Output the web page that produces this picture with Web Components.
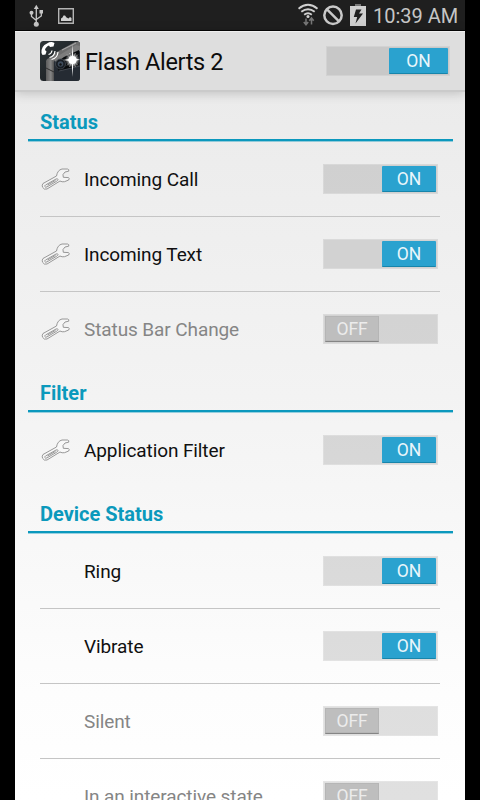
<!DOCTYPE html>
<html lang="en">
<head>
<meta charset="utf-8">
<title>Flash Alerts 2</title>
<style>
html, body { margin: 0; height: 800px; overflow: hidden; background: #000; font-family: Roboto, "Liberation Sans", sans-serif; }
</style>
</head>
<body>
<flash-app></flash-app>
<script>
class Base extends HTMLElement {
  connectedCallback() {
    if (this.shadowRoot) return;
    this.attachShadow({ mode: "open" }).innerHTML = this.render();
  }
}

customElements.define("status-bar", class extends Base {
  render() {
    return `<style>
      :host { display: flex; align-items: center; height: 30px; background: #1f1f1f; border-bottom: 1px solid #050505; color: #c6c6c6; }
      svg { display: block; flex: none; }
      .space { flex: 1; }
      .time { box-sizing: border-box; width: 85px; height: 30px; padding-top: 2px; margin-right: 7px; font-size: 20px; line-height: 28px; white-space: nowrap; letter-spacing: 0; }
    </style>
    <svg width="60" height="30" viewBox="15 0 60 30" fill="none" stroke="#c6c6c6">
      <path d="M36.300 8V24M31.500 13V16.500L36.300 20.500M41.300 13V16L36.300 19.500" stroke-width="1.300"/>
      <path d="M36.300 4.800L38.800 9H33.800Z" fill="#c6c6c6" stroke="none"/>
      <circle cx="36.300" cy="24.300" r="2.500" fill="#c6c6c6" stroke="none"/>
      <circle cx="31.500" cy="12.800" r="2" fill="#c6c6c6" stroke="none"/>
      <path d="M39.500 10H43V13.500H39.500Z" fill="#c6c6c6" stroke="none"/>
      <path d="M58.700 8.700H73.300V23.300H58.700Z" stroke="#b4b4b4" stroke-width="1.400"/>
      <path d="M61 21V18.500L62.500 17.500L63.500 15.500H65L66.500 17.500L68.500 18.500L70 17L71.500 18V21Z" fill="#d0d0d0" stroke="none"/>
    </svg>
    <span class="space"></span>
    <svg width="75" height="30" viewBox="298 0 75 30" fill="none" stroke="#d0d0d0">
      <g stroke-width="1.900">
        <path d="M298.500 8.700Q308 1 317.500 8.700M301.300 11.800Q308 6.500 314.700 11.800M304.200 14.700Q308 11.800 311.800 14.700"/>
      </g>
      <circle cx="308" cy="16.600" r="1.500" fill="#d0d0d0" stroke="none"/>
      <path d="M306 18.500V24.500M303.800 22L306 24.700L308.200 22M311.500 24.500V18.500M309.300 20.700L311.500 18L313.700 20.700" stroke="#777" stroke-width="1.500"/>
      <circle cx="333" cy="15.300" r="8.700" stroke="#c9c9c9" stroke-width="2.500"/>
      <path d="M327 9.300L339 21.300" stroke="#c9c9c9" stroke-width="2.500"/>
      <path d="M355 4H361V6H355Z" fill="#777" stroke="none"/>
      <path d="M350 6H366V26H350Z" fill="#cfcfcf" stroke="none"/>
      <path d="M356 9.500H361.500L359 13.500H363L355.500 23.500L357.200 17H353.800Z" fill="#1f1f1f" stroke="none"/>
    </svg>
    <span class="time">10:39 AM</span>`;
  }
});

customElements.define("toggle-switch", class extends Base {
  render() {
    const on = this.hasAttribute("on");
    return `<style>
      :host { display: flex; box-sizing: border-box; flex: none; width: var(--w, 115px); height: 30px; padding: 2px 2px 2px 2px; background: var(--track, rgba(0,0,0,.12)); box-shadow: inset 0 0 0 1px rgba(255,255,255,.18); justify-content: ${on ? "flex-end" : "flex-start"}; }
      span { box-sizing: border-box; width: var(--thumb, 54px); height: 26px; padding-top: 1px; border-radius: 1px; text-align: center; font-size: 17.500px; line-height: 25px; letter-spacing: -.1px;
        ${on ? "background: #2aa2cf; color: #e9f6fb; border-bottom: 1px solid #1785ab;" : "background: #bebebe; color: #ececec; border-bottom: 1px solid #858585; box-shadow: inset 0 0 0 .5px #adadad;"} }
    </style><span>${on ? "ON" : "OFF"}</span>`;
  }
});

customElements.define("app-icon", class extends Base {
  render() {
    return `<style>:host { display: block; width: 40px; height: 40px; flex: none; } svg { display: block; }</style>
    <svg width="40" height="40" viewBox="0 0 40 40">
      <defs>
        <clipPath id="c"><rect width="40" height="40" rx="3.500"/></clipPath>
        <linearGradient id="bg" x2="1" y2="1"><stop stop-color="#2e3538"/><stop offset="1" stop-color="#15191d"/></linearGradient>
        <linearGradient id="m" x2="1"><stop stop-color="#5c5c5c"/><stop offset=".6" stop-color="#858585"/><stop offset="1" stop-color="#505050"/></linearGradient>
        <radialGradient id="g"><stop stop-color="#fff"/><stop offset=".35" stop-color="#fff" stop-opacity=".8"/><stop offset="1" stop-color="#fff" stop-opacity="0"/></radialGradient>
      </defs>
      <g clip-path="url(#c)">
        <rect width="40" height="40" fill="url(#bg)"/>
        <path d="M6 40V21Q6 18 9 17L15 12L35 1H40V40Z" fill="#6c6c6c"/>
        <path d="M6 40V21L10 17L14 21V40Z" fill="url(#m)"/>
        <path d="M14 40V22Q14 18 17 17L40 8V40Z" fill="#252b33"/>
        <path d="M13 18L36 4L40 5V10L16 21Z" fill="#7d7d7d"/>
        <path d="M22 9L36 2" stroke="#aaa" stroke-width="1"/>
        <path d="M6 27L14 31" stroke="#303030"/>
        <path d="M17 21L24 16L39 9V25L19 30Q16 27 17 21Z" fill="#090b0d"/>
        <path d="M19 30L40 25" stroke="#4c535b" stroke-width=".8"/>
        <circle cx="20.500" cy="23" r="5" fill="#181d23" stroke="#484e56" stroke-width=".8"/>
        <circle cx="20.500" cy="23" r="2.800" fill="#3e4b5b"/>
        <circle cx="20.500" cy="23.500" r="1.200" fill="#111"/>
        <path d="M1.500 12Q1 5 7 2.500Q11 0 14.500 2L13.500 5.500L10 6L9 4.500Q5.500 6 5 9L6.500 10.500L5.500 13.500L2.500 14Z" fill="#fff"/>
        <path d="M8.500 13.500Q11.500 13 12 9.500M9.500 16.500Q14.500 15.500 15 10M11.500 18.500Q17.500 17 18 11" stroke="#fff" stroke-width="1.200" fill="none"/>
        <circle cx="32.500" cy="19" r="7.500" fill="url(#g)"/>
        <path d="M32.500 3L33.200 17L40 18.800L33.400 20.300L32.500 36L31.700 20.300L23 19L31.700 17.500Z" fill="#fff"/>
        <path d="M27 13.500L38 24.500M38 13.500L27 24.500M29.500 12L35.500 26M35.500 12L29.500 26" stroke="#fff" stroke-width=".4"/>
        <circle cx="32.500" cy="19" r="4" fill="#fff"/>
      </g>
    </svg>`;
  }
});

customElements.define("app-header", class extends Base {
  render() {
    return `<style>
      :host { display: flex; align-items: center; box-sizing: border-box; height: 61px; padding: 0 15px 0 25px; background: #dedede; border-top: 1px solid #eee; border-bottom: 2px solid #cacaca; box-shadow: 0 1px 11px rgba(0,0,0,.2); position: relative; z-index: 1; }
      h1 { flex: 1; margin: 2px 0 0 5px; font-size: 23.500px; font-weight: 400; line-height: 30px; letter-spacing: -.38px; color: #0c0c0c; white-space: nowrap; }
      toggle-switch { --w: 124px; --thumb: 59px; --track: #c8c8c8; }
    </style><app-icon></app-icon><h1><slot></slot></h1><toggle-switch on></toggle-switch>`;
  }
});

customElements.define("wrench-icon", class extends Base {
  render() {
    return `<style>:host { display: block; width: 30px; height: 24px; } svg { display: block; }</style>
    <svg width="30" height="24" viewBox="0 0 30 24" fill="none" stroke="#8c8c8c" stroke-width=".9" stroke-linejoin="round">
      <path d="M3 16.500L16.500 9Q17.500 3 22 2H27.500Q29.500 2.500 28.700 4.200L25 5Q21.800 7.500 23.300 10.300L28.500 10.600Q29.800 11.300 28.700 13L24.500 14.700Q22 15.200 20 14L7 22Q4 23 2.500 20.200Q1.700 18 3 16.500Z" fill="rgba(255,255,255,.35)"/>
      <path d="M5.500 18L16 12Q18 11.300 18 12.600Q18 13.400 16.700 14.200L7 19.900Q5.200 20.700 4.800 19.500Q4.700 18.500 5.500 18ZM7.500 18L15.500 13.400"/>
    </svg>`;
  }
});

customElements.define("section-title", class extends Base {
  render() {
    return `<style>
      :host { display: block; box-sizing: border-box; height: 45px; margin: 0 12.500px 1px 13px; padding: 12px 12px 0 12px; border-bottom: 2px solid #0b98bd; box-shadow: 0 1px 0 rgba(11,152,189,.4); font-size: 20px; font-weight: 700; line-height: 28px; color: #0b99bc; }
    </style><slot></slot>`;
  }
});

customElements.define("setting-row", class extends Base {
  render() {
    const on = this.hasAttribute("on");
    return `<style>
      :host { display: flex; box-sizing: border-box; align-items: center; height: 75px; margin: 0 25px; padding-right: 2px; border-bottom: 1px solid ${this.hasAttribute("last") ? "transparent" : "#c5c5c5"}; }
      .icon { width: 44px; flex: none; }
      .label { flex: 1; font-size: 19px; line-height: 26px; padding-top: 1px; letter-spacing: -.1px; color: ${on ? "#101010" : "#858585"}; white-space: nowrap; }
    </style>
    <span class="icon">${this.hasAttribute("tool") ? "<wrench-icon></wrench-icon>" : ""}</span>
    <span class="label"><slot></slot></span>
    <toggle-switch ${on ? "on" : ""}></toggle-switch>`;
  }
});

customElements.define("flash-app", class extends Base {
  render() {
    return `<style>
      :host { display: flex; flex-direction: column; width: 450px; height: 800px; margin: 0 auto; overflow: hidden; }
      main { flex: 1; min-height: 0; overflow: hidden; padding-top: 4px; background: linear-gradient(#ebebeb, #eee 15%, #f3f3f3 43%, #fdfdfd 85%, #fff); }
    </style>
    <status-bar></status-bar>
    <app-header>Flash Alerts 2</app-header>
    <main>
      <section-title>Status</section-title>
      <setting-row tool on>Incoming Call</setting-row>
      <setting-row tool on>Incoming Text</setting-row>
      <setting-row tool last>Status Bar Change</setting-row>
      <section-title>Filter</section-title>
      <setting-row tool on last>Application Filter</setting-row>
      <section-title>Device Status</section-title>
      <setting-row on>Ring</setting-row>
      <setting-row on>Vibrate</setting-row>
      <setting-row>Silent</setting-row>
      <setting-row>In an interactive state</setting-row>
    </main>`;
  }
});
</script>
</body>
</html>
